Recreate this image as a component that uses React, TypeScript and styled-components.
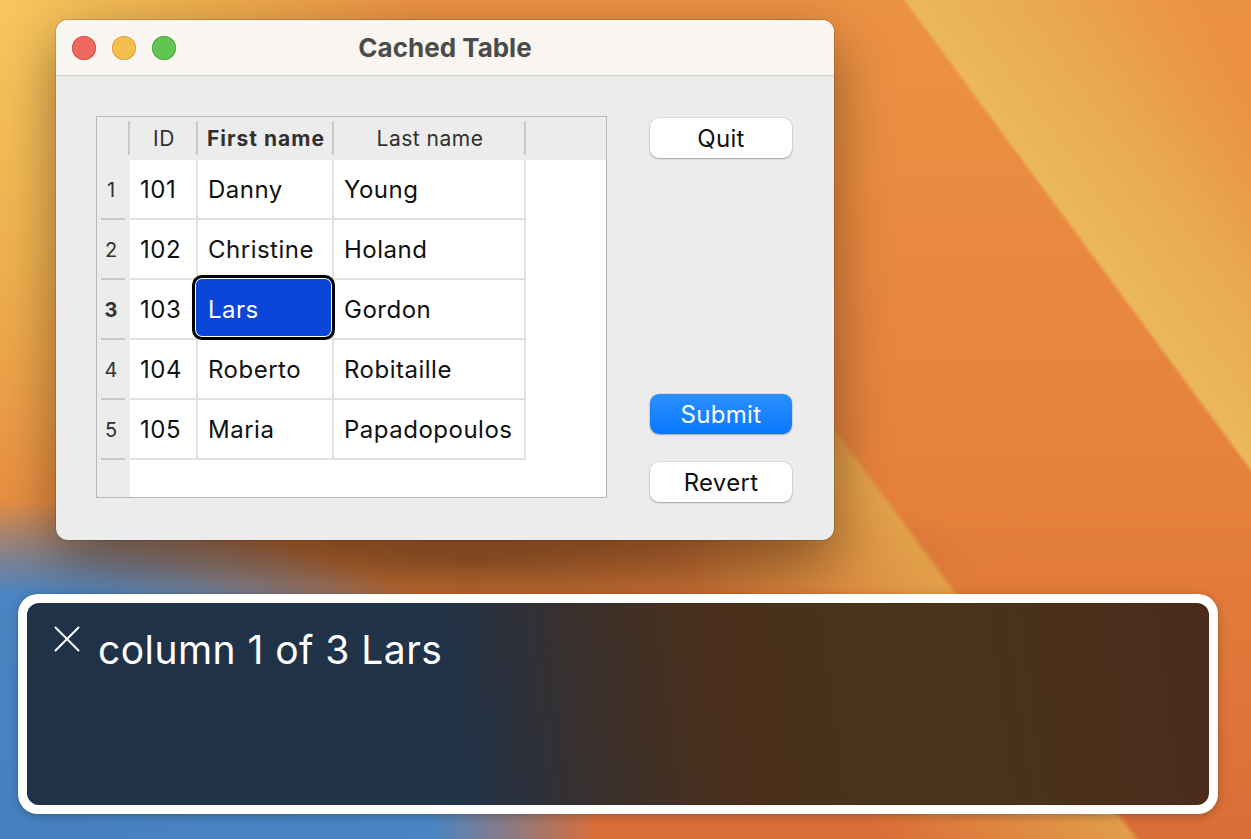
import React from "react";
import styled, { createGlobalStyle, css } from "styled-components";

const GlobalStyle = createGlobalStyle`
  html, body {
    margin: 0;
    padding: 0;
  }
  body {
    font-family: Inter, "Noto Sans", "Liberation Sans", sans-serif;
    -webkit-font-smoothing: antialiased;
  }
  * {
    box-sizing: border-box;
  }
`;

const Desktop = styled.div`
  position: relative;
  width: 1251px;
  height: 839px;
  overflow: hidden;
  background:
    radial-gradient(ellipse 600px 340px at 0% 100%, #4580c0 0%, #4985c3 72%, rgba(73, 133, 195, 0) 100%),
    radial-gradient(ellipse 520px 90px at 470px 560px, rgba(140, 80, 35, 0.75) 0%, rgba(140, 80, 35, 0) 100%),
    linear-gradient(53.6deg, rgba(235, 183, 90, 0) 81.3%, #ebb75a 81.6%, #e9aa50 88%, rgba(234, 140, 62, 0) 97%),
    radial-gradient(ellipse 420px 600px at 0% 0%, #f7c75e 0%, #efb04e 45%, rgba(236, 160, 70, 0) 100%),
    linear-gradient(180deg, #ec9243 0%, #e5803b 60%, #db6d38 100%);

  /* lighter wedge of the wallpaper, only in the lower half */
  &::before {
    content: "";
    position: absolute;
    inset: 0;
    background: linear-gradient(53.6deg, rgba(222, 160, 72, 0) 47%, rgba(226, 166, 76, 0.85) 60.6%, rgba(224, 120, 56, 0) 61%);
    -webkit-mask-image: linear-gradient(180deg, transparent 42%, #000 56%);
    mask-image: linear-gradient(180deg, transparent 42%, #000 56%);
  }
`;

/* ---------- window ---------- */

const Window = styled.div`
  position: absolute;
  left: 56px;
  top: 20px;
  width: 778px;
  height: 520px;
  border-radius: 12px;
  overflow: hidden;
  display: flex;
  flex-direction: column;
  background: #ececec;
  box-shadow: 0 0 0 1px rgba(0, 0, 0, 0.12), 0 20px 56px rgba(0, 0, 0, 0.4);
`;

const TitleBar = styled.div`
  height: 56px;
  flex: none;
  display: grid;
  grid-template-columns: 1fr auto 1fr;
  align-items: center;
  background: #f9f6f2;
  border-bottom: 1px solid #d5d2ce;
  padding-left: 16px;
`;

const Lights = styled.div`
  display: flex;
  gap: 16px;
`;

const Light = styled.span<{ $color: string; $edge: string }>`
  width: 24px;
  height: 24px;
  border-radius: 50%;
  background: ${(p) => p.$color};
  box-shadow: inset 0 0 0 1px ${(p) => p.$edge};
`;

const Title = styled.div`
  font-size: 26px;
  font-weight: 700;
  color: #4b4b4b;
  margin-left: -16px;
`;

const Body = styled.div`
  flex: 1;
  display: flex;
  gap: 43px;
  padding: 40px 42px 42px 40px;
`;

/* ---------- table ---------- */

const Table = styled.div`
  width: 511px;
  height: 382px;
  border: 1px solid #b8b8b8;
  background: #fff;
  display: grid;
  grid-template-columns: 33px 68px 136px 192px 1fr;
  grid-template-rows: 43px repeat(5, 60px) 1fr;
`;

const HeaderCell = styled.div<{ $bold?: boolean; $sep?: boolean }>`
  position: relative;
  background: #ececec;
  display: flex;
  align-items: center;
  justify-content: center;
  font-size: 21px;
  color: #303030;
  font-weight: ${(p) => (p.$bold ? 700 : 400)};
  letter-spacing: ${(p) => (p.$bold ? 1 : 0.5)}px;
  ${(p) =>
    p.$sep &&
    css`
      &::after {
        content: "";
        position: absolute;
        right: 0;
        top: 4px;
        bottom: 5px;
        width: 2px;
        background: #c9c9c9;
      }
    `}
`;

const RowHeader = styled.div<{ $bold?: boolean; $last?: boolean }>`
  position: relative;
  background: #ececec;
  display: flex;
  align-items: center;
  justify-content: center;
  padding-right: 5px;
  font-size: 20px;
  color: #303030;
  font-weight: ${(p) => (p.$bold ? 700 : 400)};
  ${(p) =>
    !p.$last &&
    css`
      &::after {
        content: "";
        position: absolute;
        left: 4px;
        right: 5px;
        bottom: 0;
        height: 2px;
        background: #c9c9c9;
      }
    `}
`;

const DataCell = styled.div<{ $selected?: boolean }>`
  display: flex;
  align-items: center;
  padding-left: 10px;
  background: #fff;
  border-right: 2px solid #e0e0e0;
  border-bottom: 2px solid #e0e0e0;
  font-size: 24px;
  letter-spacing: 0.5px;
  color: #111;
  ${(p) =>
    p.$selected &&
    css`
      position: relative;
      z-index: 1;
      color: #fff;
      &::before {
        content: "";
        position: absolute;
        left: -6px;
        right: -3px;
        top: -5px;
        bottom: -2px;
        border: 3px solid #000;
        border-radius: 10px;
        background: #0a47d9;
        box-shadow: inset 0 0 0 1px #fff;
      }
    `}
`;

const CellText = styled.span`
  position: relative;
`;

const Filler = styled.div<{ $gray?: boolean }>`
  background: ${(p) => (p.$gray ? "#ececec" : "#fff")};
`;

/* ---------- buttons ---------- */

const ButtonColumn = styled.div`
  width: 142px;
  display: flex;
  flex-direction: column;
  padding-top: 2px;
`;

const Button = styled.button<{ $primary?: boolean; $gap?: number }>`
  height: 40px;
  width: 100%;
  border: none;
  border-radius: 9px;
  margin-top: ${(p) => p.$gap ?? 0}px;
  font-family: inherit;
  font-size: 24px;
  letter-spacing: 0.3px;
  color: ${(p) => (p.$primary ? "#fff" : "#111")};
  background: ${(p) => (p.$primary ? "linear-gradient(180deg, #2b8fff 0%, #0a78ff 100%)" : "#fff")};
  box-shadow: 0 0 0 0.5px rgba(0, 0, 0, 0.12), 0 1px 2px rgba(0, 0, 0, 0.25);
`;

/* ---------- voiceover caption panel ---------- */

const Panel = styled.div`
  position: absolute;
  left: 18px;
  top: 594px;
  width: 1200px;
  height: 220px;
  padding: 9px;
  border-radius: 20px;
  background: #fff;
  box-shadow: 0 2px 10px rgba(0, 0, 0, 0.25);
`;

const PanelInner = styled.div`
  height: 100%;
  border-radius: 12px;
  background: linear-gradient(82deg, #1f3248 0%, #213349 36%, #3a2f2b 48%, #4a301c 58%, #4a331a 80%, #4b2b1c 100%);
  display: flex;
  align-items: flex-start;
  gap: 18px;
  padding: 23px 27px;
`;

const Caption = styled.div`
  margin-top: 4px;
  font-size: 39px;
  line-height: 1;
  letter-spacing: 0.45px;
  color: #fff;
`;

const CloseIcon = () => (
  <svg width="26" height="26" viewBox="0 0 26 26" fill="none">
    <path d="M1.5 1.5 L24.5 24.5 M24.5 1.5 L1.5 24.5" stroke="#fff" strokeWidth="2" strokeLinecap="round" />
  </svg>
);

const rows = [
  { id: 101, first: "Danny", last: "Young" },
  { id: 102, first: "Christine", last: "Holand" },
  { id: 103, first: "Lars", last: "Gordon" },
  { id: 104, first: "Roberto", last: "Robitaille" },
  { id: 105, first: "Maria", last: "Papadopoulos" },
];

const selectedRow = 2;

export default function App() {
  return (
    <>
      <GlobalStyle />
      <Desktop>
        <Window>
          <TitleBar>
            <Lights>
              <Light $color="#ee6a5f" $edge="#d8574c" />
              <Light $color="#f5bf4f" $edge="#dca540" />
              <Light $color="#61c554" $edge="#50aa43" />
            </Lights>
            <Title>Cached Table</Title>
            <div />
          </TitleBar>
          <Body>
            <Table>
              <HeaderCell $sep />
              <HeaderCell $sep>ID</HeaderCell>
              <HeaderCell $sep $bold>
                First name
              </HeaderCell>
              <HeaderCell $sep>Last name</HeaderCell>
              <HeaderCell />
              {rows.map((r, i) => (
                <React.Fragment key={r.id}>
                  <RowHeader $bold={i === selectedRow}>{i + 1}</RowHeader>
                  <DataCell>{r.id}</DataCell>
                  <DataCell $selected={i === selectedRow}>
                    <CellText>{r.first}</CellText>
                  </DataCell>
                  <DataCell>{r.last}</DataCell>
                  <Filler />
                </React.Fragment>
              ))}
              <RowHeader $last />
              <Filler />
              <Filler />
              <Filler />
              <Filler />
            </Table>
            <ButtonColumn>
              <Button>Quit</Button>
              <Button $primary $gap={236}>
                Submit
              </Button>
              <Button $gap={28}>Revert</Button>
            </ButtonColumn>
          </Body>
        </Window>
        <Panel>
          <PanelInner>
            <CloseIcon />
            <Caption>column 1 of 3 Lars</Caption>
          </PanelInner>
        </Panel>
      </Desktop>
    </>
  );
}
